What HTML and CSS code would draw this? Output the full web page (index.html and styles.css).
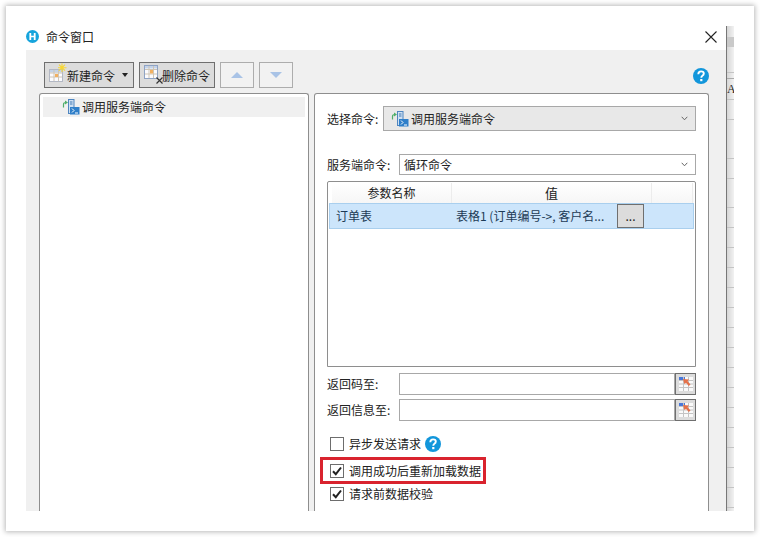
FILE: index.html
```html
<!DOCTYPE html>
<html lang="zh-CN">
<head>
<meta charset="utf-8">
<title>命令窗口</title>
<link rel="stylesheet" href="styles.css">
</head>
<body>
<svg class="defs" width="0" height="0">
  <defs>
    <symbol id="server" viewBox="0 0 18 16">
      <path d="M1.5 8.5V5.5Q1.5 3.5 4 3.5" fill="none" stroke="#4fae6a" stroke-width="1.2"/>
      <path d="M3 1.5L6 3.5L3 5.5Z" fill="#4fae6a"/>
      <rect x="6.5" y=".5" width="5.5" height="14" fill="#cfe0f2" stroke="#4f86c0"/>
      <path d="M8 3H10.5M8 5H10.5" stroke="#3f78b5"/>
      <rect x="8" y="8" width="9.5" height="7.5" fill="#2f7fc9"/>
      <path d="M10 9.5L12 11.5L10 13.5M13 14H16" fill="none" stroke="#fff"/>
    </symbol>
    <symbol id="help" viewBox="0 0 16 16">
      <circle cx="8" cy="8" r="8" fill="#1296db"/>
      <path d="M5.3 6.2Q5.4 3.4 8.1 3.4Q10.8 3.4 10.8 5.6Q10.8 6.9 9.4 7.8Q8.3 8.5 8.3 9.8" fill="none" stroke="#fff" stroke-width="1.9"/>
      <rect x="7.2" y="11" width="2.2" height="2.2" fill="#fff"/>
    </symbol>
    <symbol id="pick" viewBox="0 0 16 16">
      <rect x="1" y="1" width="14" height="14" fill="#fafafa"/>
      <rect x="1" y="1" width="6" height="3" fill="#4a78d8"/>
      <path d="M1 4.5H15M1 8H15M1 11.5H15M5.5 1V15M10.5 1V15" stroke="#c4c4c4" fill="none"/>
      <path d="M5 3L11 3.5L9.6 5.2L12.5 8.5L10.8 10L8 6.7L6.4 8Z" fill="#e4714a"/>
    </symbol>
    <symbol id="chev" viewBox="0 0 7 5">
      <path d="M.7 .8L3.5 3.8L6.3 .8" fill="none" stroke="#666"/>
    </symbol>
    <symbol id="check" viewBox="0 0 12 12">
      <path d="M2 6.2L4.8 9.2L10 2.5" fill="none" stroke="#222" stroke-width="2"/>
    </symbol>
  </defs>
</svg>

<div class="card">
  <div class="dialog">
    <header class="titlebar">
      <svg class="logo" width="13" height="13" viewBox="0 0 13 13">
        <circle cx="6.5" cy="6.5" r="6.5" fill="#16a4dc"/>
        <path d="M3.4 3V10H5.2V7.3H7.8V10H9.6V3H7.8V5.7H5.2V3Z" fill="#fff"/>
      </svg>
      <span class="title">命令窗口</span>
      <svg class="close" width="12" height="12" viewBox="0 0 12 12">
        <path d="M.5 .5L11.5 11.5M11.5 .5L.5 11.5" stroke="#222" stroke-width="1.1"/>
      </svg>
    </header>

    <main class="panel">
      <div class="toolbar">
        <button class="tool tool-new">
          <svg width="18" height="20" viewBox="0 0 18 20">
            <rect x=".5" y="6.5" width="13" height="12" fill="#fbfbff" stroke="#b3b8c4"/>
            <rect x="1" y="7" width="12" height="2.5" fill="#c3d3ea"/>
            <path d="M1 10H13M1 14H13M5 7V18M9.5 7V18" stroke="#cfc5b4"/>
            <rect x="6" y="11" width="3" height="3" fill="#f2b061"/>
            <path d="M13 .5V9M9 4.7H17.5M10 1.7L16 7.7M16 1.7L10 7.7" stroke="#f7d733" stroke-width="1.1"/>
          </svg>
          <span class="tool-text">新建命令</span>
          <i class="caret"></i>
        </button>
        <button class="tool tool-del">
          <svg width="20" height="20" viewBox="0 0 20 20">
            <rect x=".5" y=".5" width="13" height="13" fill="#fbfbff" stroke="#8fa3c4"/>
            <rect x="1" y="1" width="12" height="2.5" fill="#c3d3ea"/>
            <path d="M1 4.5H13M1 9H13M5 1V13M9.5 1V13" stroke="#cfc5b4"/>
            <rect x="6" y="5" width="3" height="3.5" fill="#f2b061"/>
            <path d="M12.5 12.5L18.5 18.5M18.5 12.5L12.5 18.5" stroke="#333" stroke-width="1.2"/>
          </svg>
          <span class="tool-text">删除命令</span>
        </button>
        <button class="tool-arrow"><i class="tri-up"></i></button>
        <button class="tool-arrow"><i class="tri-down"></i></button>
        <svg class="help-top" width="16" height="16"><use href="#help"/></svg>
      </div>

      <div class="columns">
        <section class="tree">
          <div class="tree-row">
            <svg width="18" height="16"><use href="#server"/></svg>
            <span>调用服务端命令</span>
          </div>
        </section>

        <section class="props">
          <div class="row-select">
            <label class="lab">选择命令:</label>
            <div class="combo combo-gray">
              <svg width="18" height="16"><use href="#server"/></svg>
              <span class="grow">调用服务端命令</span>
              <svg width="7" height="5"><use href="#chev"/></svg>
            </div>
          </div>

          <div class="row-server">
            <label class="lab lab-wide">服务端命令:</label>
            <div class="combo combo-white">
              <span class="grow">循环命令</span>
              <svg width="7" height="5"><use href="#chev"/></svg>
            </div>
          </div>

          <div class="grid">
            <div class="grid-head">
              <div class="h1">参数名称</div>
              <div class="h2">值</div>
              <div class="h3"></div>
            </div>
            <div class="grid-row">
              <span class="c1">订单表</span>
              <span class="c2">表格1 (订单编号-&gt;, 客户名...</span>
              <button class="more">...</button>
            </div>
          </div>

          <div class="ret ret-first">
            <label class="lab lab-wide">返回码至:</label>
            <div class="ret-input"></div>
            <button class="ret-btn"><svg width="16" height="16"><use href="#pick"/></svg></button>
          </div>
          <div class="ret">
            <label class="lab lab-wide">返回信息至:</label>
            <div class="ret-input"></div>
            <button class="ret-btn"><svg width="16" height="16"><use href="#pick"/></svg></button>
          </div>

          <div class="opts">
            <div class="opt">
              <span class="box"></span>
              <span>异步发送请求</span>
              <svg class="help-inline" width="16" height="16"><use href="#help"/></svg>
            </div>
            <div class="opt opt-mark">
              <span class="box"><svg width="12" height="12"><use href="#check"/></svg></span>
              <span>调用成功后重新加载数据</span>
            </div>
            <div class="opt opt-last">
              <span class="box"><svg width="12" height="12"><use href="#check"/></svg></span>
              <span>请求前数据校验</span>
            </div>
          </div>
        </section>
      </div>
    </main>
  </div>

  <aside class="sheet">
    <div class="sheet-top"></div>
    <div class="sheet-head"></div>
    <div class="sheet-r1"></div>
    <div class="sheet-r2"></div>
    <div class="sheet-a">A</div>
    <div class="sheet-r3"></div>
    <div class="sheet-r4"></div>
    <div class="sheet-r5"></div>
    <div class="sheet-rest"></div>
  </aside>
</div>
</body>
</html>
```

FILE: styles.css
```css
* { box-sizing: border-box; }
html, body { margin: 0; padding: 0; }
body {
  width: 760px;
  height: 537px;
  background: #fff;
  overflow: hidden;
  font: 12px/16px "Noto Sans CJK SC", "Liberation Sans", sans-serif;
  color: #222;
}
.defs { display: block; height: 0; }
button { font: inherit; color: inherit; padding: 0; }

.card {
  margin: 6px 0 0 6px;
  width: 748px;
  height: 525px;
  padding: 0 20px 20px;
  display: flex;
  background: #fff;
  box-shadow: 0 0 5px 1px rgba(0,0,0,.28);
}
.dialog { width: 700px; display: flex; flex-direction: column; }

.titlebar { height: 44px; display: flex; align-items: center; padding: 21px 9px 0 0; flex: none; }
.logo { flex: none; margin-bottom: 4px; }
.title { margin: 0 0 4px 7px; flex: 1; }
.close { margin-bottom: 3px; }

.panel {
  flex: 1;
  min-height: 0;
  background: #f0f0f0;
  overflow: hidden;
  padding: 12px 17px 0 13px;
  display: flex;
  flex-direction: column;
}
.toolbar { height: 26px; flex: none; display: flex; padding-left: 5px; gap: 5px; }
.tool {
  height: 26px;
  display: flex;
  align-items: center;
  background: #dcdcdc;
  border: 1px solid #6f6f6f;
}
.tool-text { padding-top: 1px; }
.tool-new { width: 90px; padding-left: 4px; }
.tool-new svg { margin: -4px 0 0 0; }
.tool-del { width: 76px; padding-left: 4px; }
.tool-del svg { margin: -1px -2px 0 0; }
.caret {
  margin-left: 7px;
  border-top: 4px solid #222;
  border-left: 3px solid transparent;
  border-right: 3px solid transparent;
}
.tool-arrow {
  width: 34px;
  height: 26px;
  background: #f2f2f2;
  border: 1px solid #adadad;
  display: flex;
  align-items: center;
  justify-content: center;
}
.tri-up, .tri-down {
  border-left: 6px solid transparent;
  border-right: 6px solid transparent;
}
.tri-up { border-bottom: 6px solid #a9c3e6; }
.tri-down { border-top: 6px solid #a9c3e6; }
.help-top { margin: 6px 0 0 auto; }

.columns { flex: 1; min-height: 0; display: flex; gap: 5px; margin-top: 5px; }
.tree, .props {
  background: #fff;
  border: 1px solid #8e8e8e;
  border-bottom: 0;
  border-radius: 3px 3px 0 0;
}
.tree { width: 270px; padding: 3px; flex: none; }
.tree-row {
  height: 20px;
  background: #f0f0f0;
  display: flex;
  align-items: center;
  padding-left: 19px;
  gap: 2px;
}
.props { width: 395px; padding: 12px 12px 0 11px; flex: none; overflow: hidden; }

.lab { flex: none; width: 57px; padding-left: 1px; }
.lab-wide { width: 73px; }
.row-select, .row-server, .ret { display: flex; align-items: center; }
.combo { flex: 1; display: flex; align-items: center; border: 1px solid #a8a8a8; padding-right: 7px; }
.grow { flex: 1; }
.combo-gray { height: 25px; background: #e8e8e8; padding-left: 7px; gap: 2px; }
.row-server { margin-top: 23px; }
.combo-white { height: 21px; background: #fff; padding-left: 4px; }

.grid {
  margin: 6px 0 0 1px;
  height: 186px;
  border: 1px solid #8e8e8e;
  border-radius: 2px 2px 0 0;
  padding: 1px;
}
.grid-head { display: flex; height: 20px; line-height: 19px; text-align: center; margin-left: 3px; background: linear-gradient(#fff, #f6f6f6); }
.h1 { width: 120px; border-right: 1px solid #ececec; }
.h2 { width: 200px; border-right: 1px solid #ececec; font-size: 13px; }
.h3 { width: 41px; border-right: 1px solid #ececec; }
.grid-row {
  height: 26px;
  background: #cce5fb;
  border: 1px solid #a9cfee;
  display: flex;
  align-items: center;
  color: #1d3b56;
}
.c1 { width: 126px; padding-left: 6px; flex: none; }
.c2 { width: 161px; flex: none; white-space: nowrap; overflow: hidden; }
.more {
  width: 27px;
  height: 24px;
  background: #dcdcdc;
  border: 1px solid #6f6f6f;
  color: #222;
  line-height: 22px;
}

.ret { margin-top: 4px; height: 22px; }
.ret-first { margin-top: 6px; }
.ret-input { flex: 1; height: 22px; background: #fff; border: 1px solid #a8a8a8; }
.ret-btn {
  width: 21px;
  height: 22px;
  background: #dcdcdc;
  border: 1px solid #6f6f6f;
  display: flex;
  align-items: center;
  justify-content: center;
}

.opts { margin: 10px 0 0 -6px; display: flex; flex-direction: column; }
.opt { height: 26px; width: 166px; display: flex; align-items: center; padding-left: 10px; gap: 5px; flex: none; }
.opt-last { height: 20px; }
.box {
  width: 14px;
  height: 14px;
  flex: none;
  background: #fff;
  border: 1px solid #6d6d6d;
  display: flex;
  align-items: center;
  justify-content: center;
}
.help-inline { margin-left: -1px; }
.opt-mark { height: 27px; border: 3px solid #d9232e; padding-left: 7px; }

.sheet {
  width: 8px;
  margin-top: 20px;
  flex: none;
  border-left: 1px solid #777;
  overflow: hidden;
  background: linear-gradient(90deg, #d6d6d6, #f2f2f2);
}
.sheet-top { height: 11px; }
.sheet-head { height: 10px; background: #c9c9c9; }
.sheet-r1 { height: 26px; border-bottom: 1px solid #c4c4c4; }
.sheet-r2 { height: 6px; border-bottom: 1px solid #aaa; }
.sheet-a { height: 21px; font: 12px/20px "Liberation Serif", serif; color: #222; border-bottom: 1px solid #c4c4c4; }
.sheet-r3 { height: 20px; border-bottom: 1px solid #c4c4c4; }
.sheet-r4 { height: 39px; border-bottom: 1px solid #c4c4c4; }
.sheet-r5 { height: 20px; border-bottom: 1px solid #c4c4c4; }
.sheet-rest {
  height: 333px;
  background: repeating-linear-gradient(transparent 0, transparent 19px, #c4c4c4 19px, #c4c4c4 20px) 0 9px;
}
```
